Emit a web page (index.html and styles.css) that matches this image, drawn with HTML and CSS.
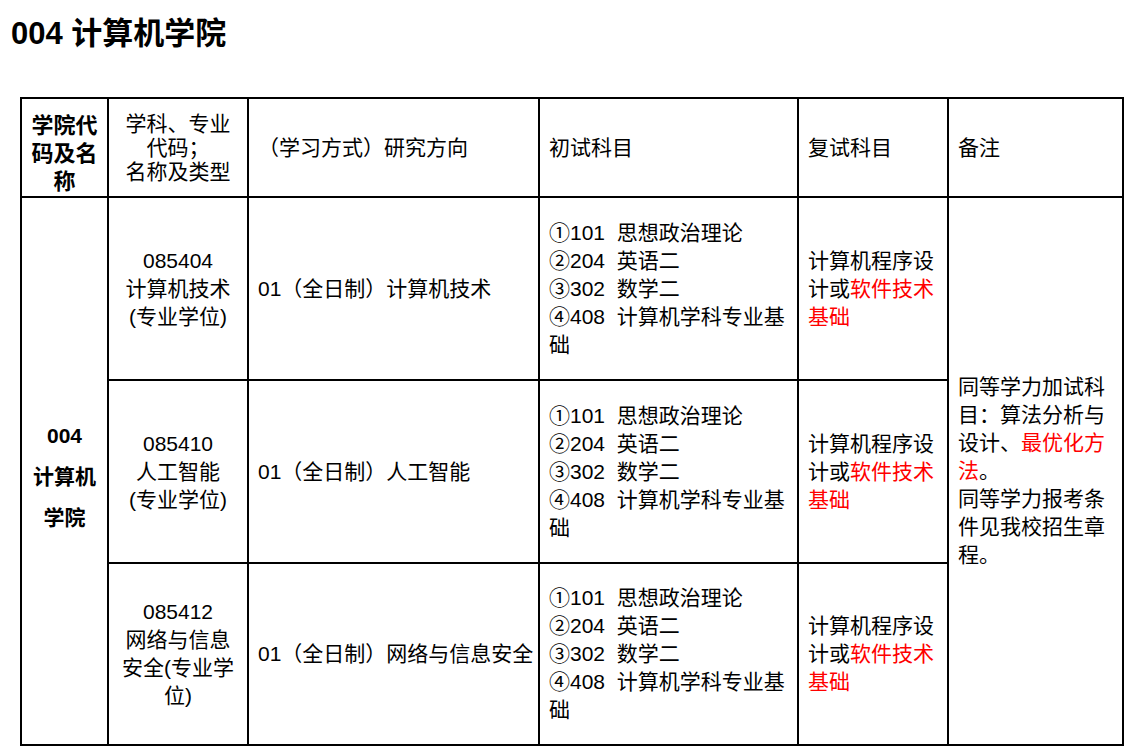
FILE: index.html
```html
<!DOCTYPE html>
<html lang="zh-CN">
<head>
<meta charset="utf-8">
<title>004 计算机学院</title>
<link rel="stylesheet" href="styles.css">
</head>
<body>
<h1 class="title">004 计算机学院</h1>
<table class="grid">
  <colgroup>
    <col class="w1"><col class="w2"><col class="w3"><col class="w4"><col class="w5"><col class="w6">
  </colgroup>
  <tr class="row-head">
    <th class="h-college">学院代<br>码及名<br>称</th>
    <th class="h-major">学科、专业<br>代码；<br>名称及类型</th>
    <th>（学习方式）研究方向</th>
    <th>初试科目</th>
    <th>复试科目</th>
    <th>备注</th>
  </tr>
  <tr class="row-a">
    <td class="college" rowspan="3">004<br>计算机<br>学院</td>
    <td class="major">085404<br>计算机技术<br><span class="lat">(</span>专业学位<span class="lat">)</span></td>
    <td>01（全日制）计算机技术</td>
    <td>①101&nbsp; 思想政治理论<br>②204&nbsp; 英语二<br>③302&nbsp; 数学二<br>④408&nbsp; 计算机学科专业基<br>础</td>
    <td>计算机程序设<br>计或<span class="red">软件技术<br>基础</span></td>
    <td class="note" rowspan="3">同等学力加试科<br>目：算法分析与<br>设计、<span class="red">最优化方<br>法</span>。<br>同等学力报考条<br>件见我校招生章<br>程。</td>
  </tr>
  <tr class="row-b">
    <td class="major">085410<br>人工智能<br><span class="lat">(</span>专业学位<span class="lat">)</span></td>
    <td>01（全日制）人工智能</td>
    <td>①101&nbsp; 思想政治理论<br>②204&nbsp; 英语二<br>③302&nbsp; 数学二<br>④408&nbsp; 计算机学科专业基<br>础</td>
    <td>计算机程序设<br>计或<span class="red">软件技术<br>基础</span></td>
  </tr>
  <tr class="row-c">
    <td class="major">085412<br>网络与信息<br>安全<span class="lat">(</span>专业学<br>位<span class="lat">)</span></td>
    <td>01（全日制）网络与信息安全</td>
    <td>①101&nbsp; 思想政治理论<br>②204&nbsp; 英语二<br>③302&nbsp; 数学二<br>④408&nbsp; 计算机学科专业基<br>础</td>
    <td>计算机程序设<br>计或<span class="red">软件技术<br>基础</span></td>
  </tr>
</table>
</body>
</html>
```
FILE: styles.css
```css
body {
  margin: 0;
  background: #fff;
  color: #000;
  font-family: "Liberation Sans", "Noto Sans CJK SC", sans-serif;
}

.title {
  margin: 0;
  padding: 16px 0 0 11px;
  font-size: 31px;
  line-height: 36px;
  font-weight: bold;
}

.grid {
  margin: 45px 0 0 20px;
  width: 1104px;
  border-collapse: collapse;
  table-layout: fixed;
  font-size: 21px;
  line-height: 28px;
}

.w1 { width: 87px; }
.w2 { width: 140px; }
.w3 { width: 291px; }
.w4 { width: 259px; }
.w5 { width: 150px; }
.w6 { width: 175px; }

.grid th,
.grid td {
  border: 2px solid #000;
  padding: 0 9px;
  text-align: left;
  vertical-align: middle;
  font-weight: normal;
  white-space: nowrap;
}

.row-head { height: 99px; }
.row-a { height: 183px; }
.row-b { height: 183px; }
.row-c { height: 182px; }

.grid .h-college {
  font-weight: bold;
  font-size: 22px;
  text-align: center;
  vertical-align: bottom;
  padding: 0 2px;
}

.grid .h-major {
  text-align: center;
  line-height: 24px;
  padding: 0 4px;
}

.grid .college {
  font-weight: bold;
  text-align: center;
  line-height: 41px;
  padding: 10px 4px 0;
}

.grid .major {
  text-align: center;
  padding: 0 4px;
}

.lat {
  font-family: "Liberation Sans", sans-serif;
}

.red {
  color: #ff0000;
}
```
